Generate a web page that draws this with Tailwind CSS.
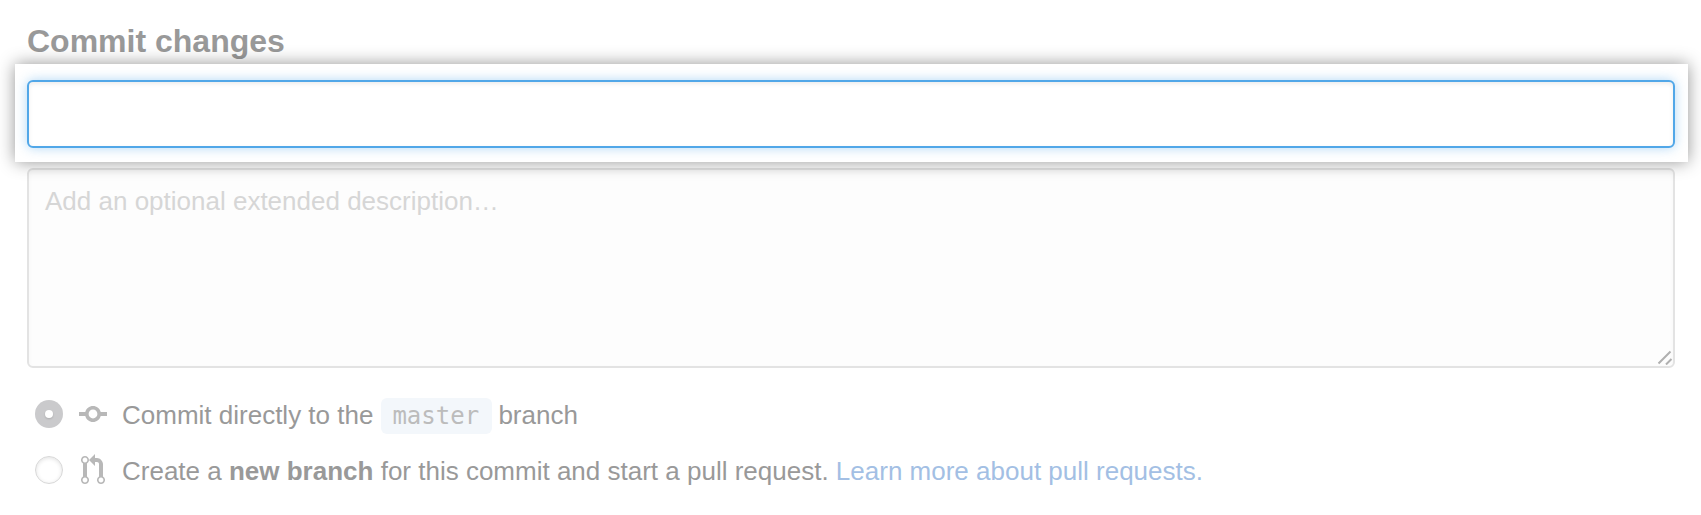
<!DOCTYPE html>
<html lang="en">
<head>
<meta charset="utf-8">
<title>Commit changes</title>
<script src="https://cdn.jsdelivr.net/npm/@tailwindcss/browser@4"></script>
</head>
<body class="h-[515px] w-[1701px] overflow-hidden bg-white font-['Liberation_Sans',Arial,sans-serif] text-[26px] text-[#999]">
<main class="flex flex-col pt-[22px]">
  <h1 class="h-[42px] pl-[27px] text-[32px] leading-[38px] font-bold whitespace-nowrap"><span>Commit changes</span></h1>
  <section class="relative z-10 ml-[15px] h-[98px] w-[1673px] bg-white px-3 pt-4 shadow-[0_0_16px_rgba(0,0,0,0.42)]">
    <div class="h-[68px] w-[1648px] rounded-[6px] border-2 border-[#51a7e8] bg-white shadow-[inset_0_2px_4px_rgba(0,0,0,0.075),0_0_12px_rgba(81,167,232,0.45)]"></div>
  </section>
  <div class="mt-[6px] ml-[27px] flex h-[200px] w-[1648px] items-end justify-between rounded-[6px] border-2 border-[#e3e3e3] bg-[#fdfdfd] pl-4 shadow-[inset_0_2px_4px_rgba(0,0,0,0.03)]">
    <p class="self-start pt-[14px] leading-[34px] whitespace-nowrap text-[#d6d6d6]"><span>Add an optional extended description…</span></p>
    <svg class="mb-[1px] size-4" viewBox="0 0 16 16" fill="none" stroke="#b0b0b0" stroke-width="2"><path d="M1.500 14.500 13.500 2.500M9 15.500 14.500 10"/></svg>
  </div>
  <div class="mt-[27px] ml-[35px] flex h-[38px] items-center">
    <span class="flex size-7 items-center justify-center rounded-full bg-[#cacacc]"><span class="size-2 rounded-full bg-white shadow-[0_1px_2px_rgba(0,0,0,0.15)]"></span></span>
    <svg class="ml-4 h-8 w-7" viewBox="0 0 14 16" fill="#b8b8b8"><path d="M10.860 7c-.45-1.720-2-3-3.860-3-1.860 0-3.410 1.280-3.860 3H0v2h3.140c.45 1.720 2 3 3.860 3 1.860 0 3.410-1.280 3.860-3H14V7h-3.140zM7 10.200c-1.220 0-2.200-.98-2.200-2.200 0-1.220.98-2.200 2.200-2.200 1.220 0 2.200.98 2.200 2.200 0 1.220-.98 2.200-2.200 2.200z"/></svg>
    <span class="ml-[15px] flex items-start pt-[4px] leading-[36px] whitespace-nowrap"><span class="-mt-px">Commit directly to the</span><span class="ml-2 h-[36px] w-[111px] rounded-[6px] bg-[#f3f7fb] pt-px pl-[11px] font-['DejaVu_Sans_Mono',monospace] text-[24px] leading-[34px] text-[#bcbcbc]">master</span><span class="-mt-px ml-[6px]">branch</span></span>
  </div>
  <div class="mt-[18px] ml-[35px] flex h-[38px] items-center">
    <span class="size-7 rounded-full border border-[#d8d8d8] bg-white shadow-[inset_0_1px_4px_rgba(0,0,0,0.12)]"></span>
    <svg class="ml-[18px] h-8 w-6" viewBox="0 0 12 16" fill="#b8b8b8"><path d="M11 11.280V5c-.03-.78-.34-1.470-.94-2.060C9.460 2.350 8.780 2.030 8 2H7V0L4 3l3 3V4h1c.27.02.48.11.69.31.21.2.3.42.31.69v6.280A1.993 1.993 0 0 0 10 15a1.993 1.993 0 0 0 1-3.720zm-1 2.920c-.66 0-1.200-.55-1.200-1.200 0-.65.55-1.200 1.200-1.200.65 0 1.200.55 1.200 1.200 0 .65-.55 1.200-1.200 1.200zM4 3c0-1.110-.89-2-2-2a1.993 1.993 0 0 0-1 3.720v6.560A1.993 1.993 0 0 0 2 15a1.993 1.993 0 0 0 1-3.720V4.720c.59-.34 1-.98 1-1.720zm-.8 10c0 .66-.55 1.200-1.200 1.200-.65 0-1.200-.55-1.200-1.200 0-.65.55-1.200 1.200-1.200.65 0 1.200.55 1.200 1.200zM2 4.200C1.340 4.200.8 3.650.8 3c0-.65.55-1.200 1.200-1.200.65 0 1.200.55 1.200 1.200 0 .65-.55 1.200-1.200 1.200z"/></svg>
    <span class="ml-[17px] pt-[2px] whitespace-nowrap">Create a <b>new branch</b> for this commit and start a pull request. <a class="text-[#a3bfe4]">Learn more about pull requests.</a></span>
  </div>
</main>
</body>
</html>
